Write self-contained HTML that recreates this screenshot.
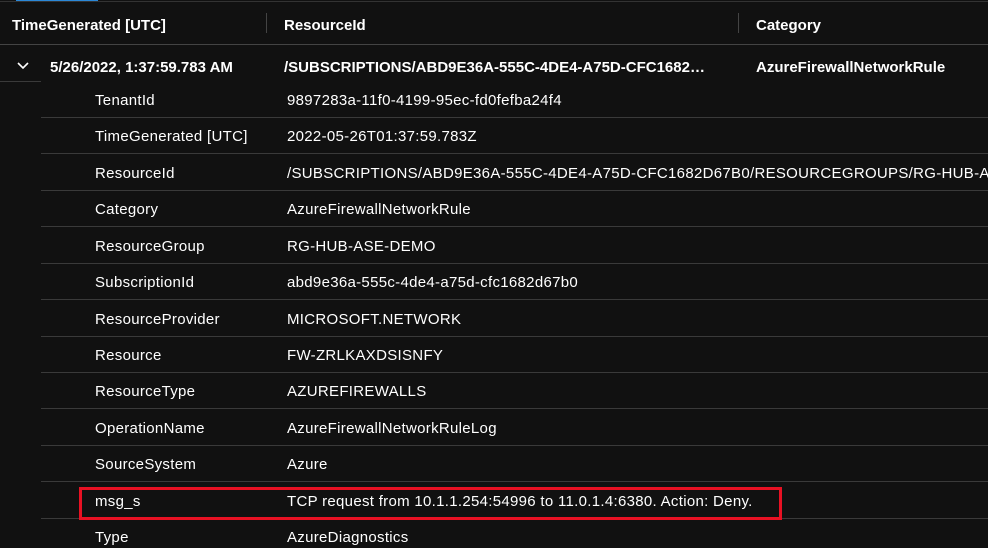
<!DOCTYPE html><html><head><style>
html,body{margin:0;width:988px;height:548px;overflow:hidden}
body{background:#111;font-family:"Liberation Sans",sans-serif;color:#fff;position:relative}
#wrap{position:absolute;left:0;top:0;width:988px;height:548px;overflow:hidden}
.a{position:absolute;white-space:nowrap}
.h{font-weight:bold;font-size:15px;top:17px}
.l{position:absolute;height:1px;background:#3a3a3a}
.k{left:95px;font-size:15px;letter-spacing:0.3px}
.v{left:287px;font-size:15px;letter-spacing:0.3px}
</style></head><body><div id="wrap">
<div class="a" style="left:16px;top:0;width:82px;height:2px;background:#2b88d8"></div>
<div class="l" style="left:0;top:1px;width:988px;background:#333"></div>
<div class="a h" style="left:12px">TimeGenerated [UTC]</div>
<div class="a" style="left:266px;top:13px;width:1px;height:20px;background:#444"></div>
<div class="a h" style="left:284px">ResourceId</div>
<div class="a" style="left:738px;top:13px;width:1px;height:20px;background:#444"></div>
<div class="a h" style="left:756px">Category</div>
<div class="l" style="left:0;top:44px;width:988px;background:#444"></div>
<svg class="a" style="left:16px;top:61px" width="14" height="10"><path d="M2 2 L7 7 L12 2" stroke="#fff" stroke-width="1.6" fill="none"/></svg>
<div class="a h" style="left:50px;top:59px">5/26/2022, 1:37:59.783 AM</div>
<div class="a h" style="left:284px;top:59px">/SUBSCRIPTIONS/ABD9E36A-555C-4DE4-A75D-CFC1682…</div>
<div class="a h" style="left:756px;top:59px">AzureFirewallNetworkRule</div>
<div class="l" style="left:0;top:81px;width:41px"></div>
<div id="rows"></div>
<div class="a" style="left:79px;top:487px;width:697px;height:27px;border:3px solid #e81123"></div>
</div>
<script>
var d=[["TenantId","9897283a-11f0-4199-95ec-fd0fefba24f4"],["TimeGenerated [UTC]","2022-05-26T01:37:59.783Z"],["ResourceId","/SUBSCRIPTIONS/ABD9E36A-555C-4DE4-A75D-CFC1682D67B0/RESOURCEGROUPS/RG-HUB-ASE-DEMO"],["Category","AzureFirewallNetworkRule"],["ResourceGroup","RG-HUB-ASE-DEMO"],["SubscriptionId","abd9e36a-555c-4de4-a75d-cfc1682d67b0"],["ResourceProvider","MICROSOFT.NETWORK"],["Resource","FW-ZRLKAXDSISNFY"],["ResourceType","AZUREFIREWALLS"],["OperationName","AzureFirewallNetworkRuleLog"],["SourceSystem","Azure"],["msg_s","TCP request from 10.1.1.254:54996 to 11.0.1.4:6380. Action: Deny."],["Type","AzureDiagnostics"]];
var h="";d.forEach(function(r,i){var y=99+i*36.42;h+='<div class="a k" style="top:'+(y-7)+'px">'+r[0]+'</div><div class="a v" style="top:'+(y-7)+'px">'+r[1]+'</div>';if(i<12)h+='<div class="l" style="left:41px;width:947px;top:'+Math.round(y+18)+'px"></div>';});
document.getElementById("rows").innerHTML=h;
</script>
</body></html>
